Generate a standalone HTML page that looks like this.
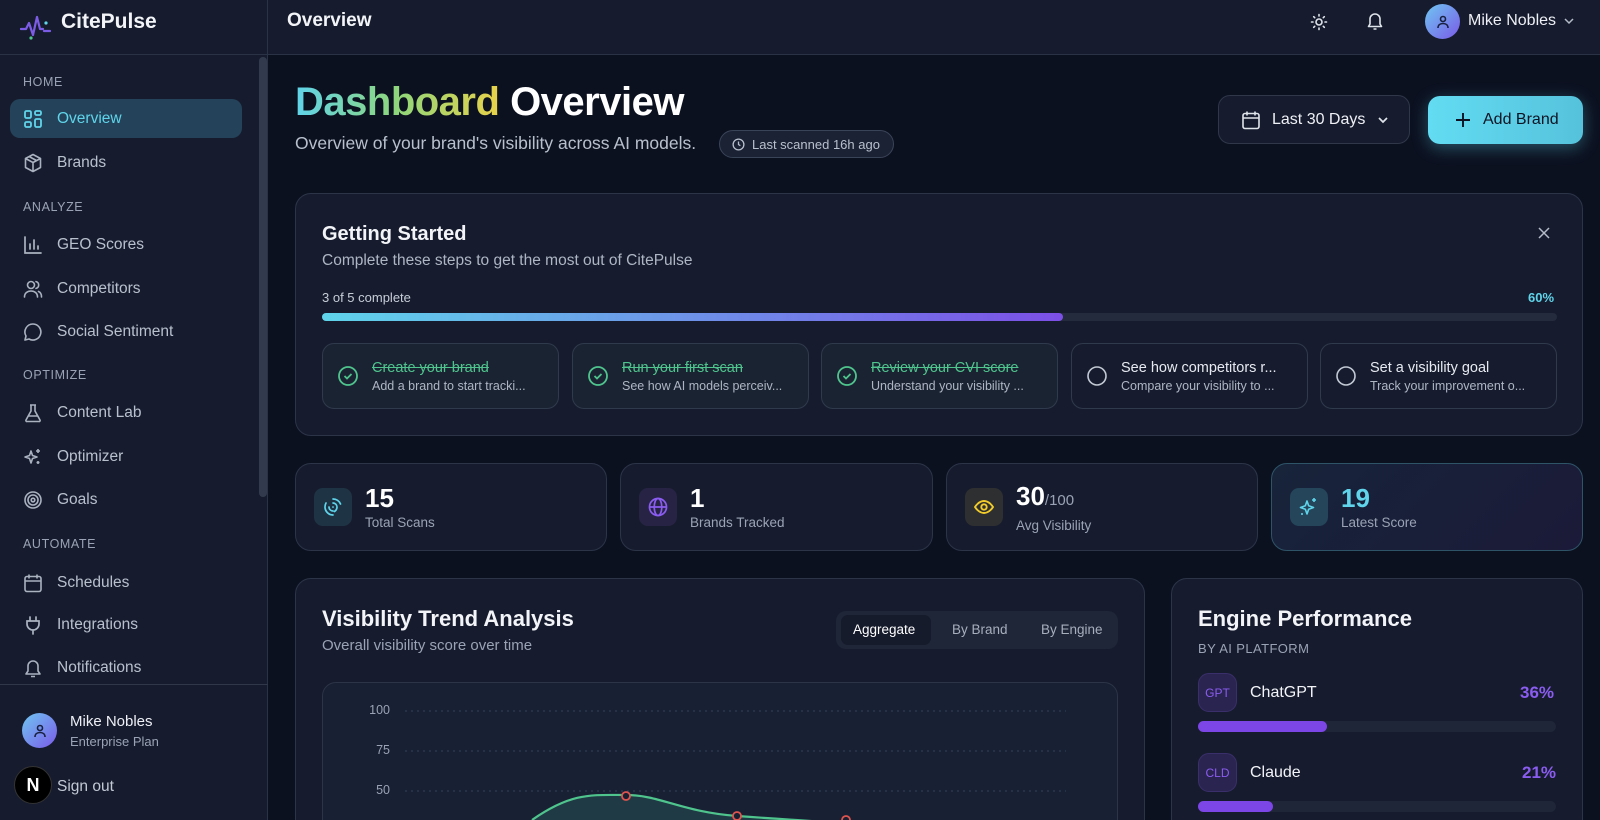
<!DOCTYPE html>
<html style="width:1600px;height:820px;overflow:hidden"><head><meta charset="utf-8"><style>
*{box-sizing:border-box;margin:0;padding:0}
body{width:1600px;height:820px;overflow:hidden;background:#0c1120;font-family:"Liberation Sans",sans-serif;color:#e6e9f0;position:relative}
.a{position:absolute}
svg{display:block}
.side{left:0;top:0;width:268px;height:820px;background:#161c2e;border-right:1px solid #2a3246}
.top{left:268px;top:0;width:1332px;height:55px;background:#161c2e;border-bottom:1px solid #2a3246}
.logo{left:0;top:0;width:268px;height:55px;border-bottom:1px solid #2a3246}
.sec{left:23px;font-size:12.5px;letter-spacing:.6px;color:#9aa3b5}
.it{left:10px;width:232px;height:39px;border-radius:10px;display:flex;align-items:center;padding-left:13px;font-size:15.5px;color:#b9c0cd}
.it svg{margin-right:14px}
.it.on{background:#24435a;color:#5fd4ea}
.card{background:#161c2e;border:1px solid #2c3448;border-radius:16px}
.step{top:343px;width:237px;height:66px;border:1px solid #2f3a4c;border-radius:12px;background:#1a2332;display:flex;align-items:center;padding-left:14px}
.step .t{font-size:14.5px;color:#e6e9f0;white-space:nowrap}
.step .s{font-size:12.5px;color:#aeb6c4;white-space:nowrap;margin-top:3px}
.step.d .t{color:#4fc48d;text-decoration:line-through}
.stat{top:463px;height:88px;display:flex;align-items:center;padding-left:18px}
.ic{width:38px;height:38px;border-radius:9px;display:flex;align-items:center;justify-content:center;margin-right:13px}
.num{font-size:26px;font-weight:bold;color:#fff;line-height:28px}
.lab{font-size:13.5px;color:#9aa3b5;margin-top:3px}
.clip{left:0;top:0;width:1600px;height:820px;overflow:hidden}
</style></head><body><div class="a clip">
<div class="a side"></div>
<div class="a logo">
 <svg class="a" style="left:20px;top:13px" width="32" height="28" viewBox="0 0 32 28"><path d="M1 16h5l3-6 4 12 4-18 3 12h3" fill="none" stroke="#7c5ce6" stroke-width="2.2" stroke-linecap="round" stroke-linejoin="round"/><circle cx="26" cy="10" r="1.6" fill="#5fd4ea"/><circle cx="11" cy="25" r="1.6" fill="#4fc48d"/><path d="M24 18h6" stroke="#7c5ce6" stroke-width="2.2" stroke-linecap="round"/></svg>
 <div class="a" style="left:61px;top:10px;font-size:21px;font-weight:bold;color:#f2f4f8">CitePulse</div>
</div>
<div class="a" style="left:259px;top:57px;width:8px;height:440px;border-radius:4px;background:#323b4e"></div>
<div class="a sec" style="top:75px">HOME</div>
<div class="a it on" style="top:99px"><svg width="20" height="20" viewBox="0 0 20 20" fill="none" stroke="#5fd4ea" stroke-width="1.8"><rect x="2" y="2" width="6" height="7" rx="1.5"/><rect x="12" y="2" width="6" height="4" rx="1.5"/><rect x="12" y="10" width="6" height="8" rx="1.5"/><rect x="2" y="13" width="6" height="5" rx="1.5"/></svg>Overview</div>
<div class="a it" style="top:143px"><svg width="20" height="20" viewBox="0 0 20 20" fill="none" stroke="#aab2c0" stroke-width="1.6" stroke-linejoin="round"><path d="M10 1.5l7.5 4v9L10 18.5l-7.5-4v-9z M2.5 5.5L10 9.5l7.5-4 M10 9.5v9 M6 3.5l7.5 4"/></svg>Brands</div>
<div class="a sec" style="top:200px">ANALYZE</div>
<div class="a it" style="top:225px"><svg width="20" height="20" viewBox="0 0 20 20" fill="none" stroke="#aab2c0" stroke-width="1.7" stroke-linecap="round"><path d="M2 2v16h16 M7 14V9 M11 14V5 M15 14v-3"/></svg>GEO Scores</div>
<div class="a it" style="top:269px"><svg width="20" height="20" viewBox="0 0 20 20" fill="none" stroke="#aab2c0" stroke-width="1.6" stroke-linecap="round"><circle cx="8" cy="6" r="3.5"/><path d="M1.5 18c0-4 3-6 6.5-6s6.5 2 6.5 6 M13 2.6a3.5 3.5 0 010 6.8 M15.5 12.5c2 .8 3 2.8 3 5.5"/></svg>Competitors</div>
<div class="a it" style="top:312px"><svg width="20" height="20" viewBox="0 0 20 20" fill="none" stroke="#aab2c0" stroke-width="1.6" stroke-linejoin="round"><path d="M10 2a8 8 0 11-4 15L2 18l1-4A8 8 0 0110 2z"/></svg>Social Sentiment</div>
<div class="a sec" style="top:368px">OPTIMIZE</div>
<div class="a it" style="top:393px"><svg width="20" height="20" viewBox="0 0 20 20" fill="none" stroke="#aab2c0" stroke-width="1.6" stroke-linejoin="round"><path d="M7 2h6 M8 2v6l-5 9a1 1 0 001 1.5h12a1 1 0 001-1.5l-5-9V2 M5 13h10"/></svg>Content Lab</div>
<div class="a it" style="top:437px"><svg width="20" height="20" viewBox="0 0 20 20" fill="none" stroke="#aab2c0" stroke-width="1.6" stroke-linejoin="round"><path d="M8 4l1.5 4.5L14 10l-4.5 1.5L8 16l-1.5-4.5L2 10l4.5-1.5z M15 2v4 M13 4h4 M15 14v3 M13.5 15.5h3"/></svg>Optimizer</div>
<div class="a it" style="top:480px"><svg width="20" height="20" viewBox="0 0 20 20" fill="none" stroke="#aab2c0" stroke-width="1.6"><circle cx="10" cy="10" r="8"/><circle cx="10" cy="10" r="5"/><circle cx="10" cy="10" r="1.8"/></svg>Goals</div>
<div class="a sec" style="top:537px">AUTOMATE</div>
<div class="a it" style="top:563px"><svg width="20" height="20" viewBox="0 0 20 20" fill="none" stroke="#aab2c0" stroke-width="1.6"><rect x="2" y="3.5" width="16" height="15" rx="2"/><path d="M2 8h16 M6 1.5v4 M14 1.5v4"/></svg>Schedules</div>
<div class="a it" style="top:605px"><svg width="20" height="20" viewBox="0 0 20 20" fill="none" stroke="#aab2c0" stroke-width="1.7" stroke-linecap="round"><path d="M7 2v4 M13 2v4 M4 6h12v3a6 6 0 01-12 0z M10 15v4"/></svg>Integrations</div>
<div class="a it" style="top:648px"><svg width="20" height="20" viewBox="0 0 20 20" fill="none" stroke="#aab2c0" stroke-width="1.6" stroke-linejoin="round"><path d="M5 8a5 5 0 0110 0v5l2 3H3l2-3z M8 18.5h4"/></svg>Notifications</div>
<div class="a" style="left:0;top:684px;width:268px;border-top:1px solid #2f3749"></div>
<div class="a" style="left:22px;top:713px;width:35px;height:35px;border-radius:50%;background:linear-gradient(135deg,#6fc6f2,#7a5ae8);display:flex;align-items:center;justify-content:center"><svg width="16" height="16" viewBox="0 0 16 16" fill="none" stroke="#1a2040" stroke-width="1.6"><circle cx="8" cy="5" r="2.5"/><path d="M3 14c0-3 2.2-4.5 5-4.5s5 1.5 5 4.5"/></svg></div>
<div class="a" style="left:70px;top:713px;font-size:15px;color:#eef0f5">Mike Nobles</div>
<div class="a" style="left:70px;top:734px;font-size:13px;color:#9aa3b5">Enterprise Plan</div>
<div class="a" style="left:14px;top:766px;width:38px;height:38px;border-radius:50%;background:#000;border:1px solid #333;color:#fff;font-size:18px;font-weight:bold;display:flex;align-items:center;justify-content:center">N</div>
<div class="a" style="left:57px;top:778px;font-size:15.5px;color:#c3c9d4">Sign out</div>

<div class="a top"></div>
<div class="a" style="left:287px;top:10px;font-size:19px;font-weight:bold;color:#f2f4f8">Overview</div>
<svg class="a" style="left:1309px;top:12px" width="20" height="20" viewBox="0 0 20 20" fill="none" stroke="#dfe3ea" stroke-width="1.6" stroke-linecap="round"><circle cx="10" cy="10" r="3"/><path d="M10 2.5v1.5M10 16v1.5M2.5 10H4M16 10h1.5M4.7 4.7l1 1M14.3 14.3l1 1M4.7 15.3l1-1M14.3 5.7l1-1"/></svg>
<svg class="a" style="left:1365px;top:11px" width="20" height="20" viewBox="0 0 20 20" fill="none" stroke="#dfe3ea" stroke-width="1.6" stroke-linejoin="round"><path d="M5 8a5 5 0 0110 0v5l1.5 2.5h-13L5 13z M8.5 18h3"/></svg>
<div class="a" style="left:1425px;top:4px;width:35px;height:35px;border-radius:50%;background:linear-gradient(135deg,#6fc6f2,#7a5ae8);display:flex;align-items:center;justify-content:center"><svg width="16" height="16" viewBox="0 0 16 16" fill="none" stroke="#1a2040" stroke-width="1.6"><circle cx="8" cy="5" r="2.5"/><path d="M3 14c0-3 2.2-4.5 5-4.5s5 1.5 5 4.5"/></svg></div>
<div class="a" style="left:1468px;top:12px;font-size:16px;color:#eef0f5">Mike Nobles</div>
<svg class="a" style="left:1563px;top:16px" width="12" height="10" viewBox="0 0 12 10" fill="none" stroke="#b5bcc8" stroke-width="1.5"><path d="M2 3l4 4 4-4"/></svg>

<div class="a" style="left:295px;top:80px;font-size:40px;font-weight:bold;letter-spacing:-.5px"><span style="background:linear-gradient(90deg,#5fd4ea,#8fd67a,#e8d24a);-webkit-background-clip:text;color:transparent">Dashboard</span> <span style="color:#fff">Overview</span></div>
<div class="a" style="left:295px;top:133px;font-size:17.5px;color:#b9c0cd">Overview of your brand's visibility across AI models.</div>
<div class="a" style="left:719px;top:130px;width:175px;height:28px;border:1px solid #3a4458;border-radius:14px;background:#1b2234;font-size:13px;color:#b9c0cd;display:flex;align-items:center;padding-left:12px"><svg width="13" height="13" viewBox="0 0 14 14" fill="none" stroke="#b9c0cd" stroke-width="1.4" style="margin-right:7px"><circle cx="7" cy="7" r="5.8"/><path d="M7 3.8V7l2 1.3"/></svg>Last scanned 16h ago</div>
<div class="a" style="left:1218px;top:95px;width:192px;height:49px;border:1px solid #2f3749;border-radius:12px;background:#161c2e;display:flex;align-items:center;padding-left:22px;font-size:16px;color:#eef0f5"><svg width="20" height="20" viewBox="0 0 20 20" fill="none" stroke="#dfe3ea" stroke-width="1.6" style="margin-right:11px"><rect x="2" y="3.5" width="16" height="15" rx="2"/><path d="M2 8h16 M6 1.5v4 M14 1.5v4"/></svg>Last 30 Days<svg width="12" height="10" viewBox="0 0 12 10" fill="none" stroke="#dfe3ea" stroke-width="1.7" style="margin-left:12px"><path d="M2 3l4 4 4-4"/></svg></div>
<div class="a" style="left:1428px;top:96px;width:155px;height:48px;border-radius:12px;background:linear-gradient(90deg,#62dcf2,#56c2dc);box-shadow:0 4px 16px rgba(90,210,235,.35);display:flex;align-items:center;padding-left:26px;font-size:16px;color:#0d1424"><svg width="18" height="18" viewBox="0 0 18 18" stroke="#0d1424" stroke-width="1.9"><path d="M9 2v14M2 9h14"/></svg><span style="margin-left:11px">Add Brand</span></div>

<div class="a card" style="left:295px;top:193px;width:1288px;height:243px"></div>
<div class="a" style="left:322px;top:223px;font-size:20px;font-weight:bold;color:#f2f4f8">Getting Started</div>
<div class="a" style="left:322px;top:252px;font-size:15.5px;color:#aeb6c4">Complete these steps to get the most out of CitePulse</div>
<svg class="a" style="left:1537px;top:226px" width="14" height="14" viewBox="0 0 14 14" stroke="#b5bcc8" stroke-width="1.5"><path d="M2 2l10 10M12 2L2 12"/></svg>
<div class="a" style="left:322px;top:290px;font-size:13px;color:#c7cdd7">3 of 5 complete</div>
<div class="a" style="left:1528px;top:290px;font-size:13px;font-weight:bold;color:#5fd4ea">60%</div>
<div class="a" style="left:322px;top:313px;width:1235px;height:8px;border-radius:4px;background:#232b3c"></div>
<div class="a" style="left:322px;top:313px;width:741px;height:8px;border-radius:4px;background:linear-gradient(90deg,#5fd4ea,#7c4fe6)"></div>
<div class="a step d" style="left:322px"><svg width="22" height="22" viewBox="0 0 22 22" fill="none" stroke="#4fc48d" stroke-width="1.8" style="margin-right:13px;flex:none"><circle cx="11" cy="11" r="9"/><path d="M7.5 11l2.5 2.5 4.5-4.5"/></svg><div><div class="t">Create your brand</div><div class="s">Add a brand to start tracki...</div></div></div>
<div class="a step d" style="left:572px"><svg width="22" height="22" viewBox="0 0 22 22" fill="none" stroke="#4fc48d" stroke-width="1.8" style="margin-right:13px;flex:none"><circle cx="11" cy="11" r="9"/><path d="M7.5 11l2.5 2.5 4.5-4.5"/></svg><div><div class="t">Run your first scan</div><div class="s">See how AI models perceiv...</div></div></div>
<div class="a step d" style="left:821px"><svg width="22" height="22" viewBox="0 0 22 22" fill="none" stroke="#4fc48d" stroke-width="1.8" style="margin-right:13px;flex:none"><circle cx="11" cy="11" r="9"/><path d="M7.5 11l2.5 2.5 4.5-4.5"/></svg><div><div class="t">Review your CVI score</div><div class="s">Understand your visibility ...</div></div></div>
<div class="a step" style="left:1071px;background:#161c2e"><svg width="22" height="22" viewBox="0 0 22 22" fill="none" stroke="#c3c9d4" stroke-width="1.6" style="margin-right:13px;flex:none"><circle cx="11" cy="11" r="9"/></svg><div><div class="t">See how competitors r...</div><div class="s">Compare your visibility to ...</div></div></div>
<div class="a step" style="left:1320px;background:#161c2e"><svg width="22" height="22" viewBox="0 0 22 22" fill="none" stroke="#c3c9d4" stroke-width="1.6" style="margin-right:13px;flex:none"><circle cx="11" cy="11" r="9"/></svg><div><div class="t">Set a visibility goal</div><div class="s">Track your improvement o...</div></div></div>

<div class="a card stat" style="left:295px;width:312px"><div class="ic" style="background:#1e3344"><svg width="22" height="22" viewBox="0 0 22 22" fill="none" stroke="#5fd4ea" stroke-width="1.7" stroke-linecap="round"><path d="M11 3a8 8 0 017.5 5 M4 7a8 8 0 00-1 4c0 4.4 3.6 8 8 8 M11 7a4 4 0 014 4c0 2-1 3.5-2.5 4.5 M7 11a4 4 0 004 4 M11 11v.1"/></svg></div><div><div class="num">15</div><div class="lab">Total Scans</div></div></div>
<div class="a card stat" style="left:620px;width:313px"><div class="ic" style="background:#272345"><svg width="22" height="22" viewBox="0 0 22 22" fill="none" stroke="#8b5cf0" stroke-width="1.7"><circle cx="11" cy="11" r="8.5"/><ellipse cx="11" cy="11" rx="3.8" ry="8.5"/><path d="M2.5 11h17"/></svg></div><div><div class="num">1</div><div class="lab">Brands Tracked</div></div></div>
<div class="a card stat" style="left:946px;width:312px"><div class="ic" style="background:#2e2f30"><svg width="22" height="22" viewBox="0 0 22 22" fill="none" stroke="#f2cc2a" stroke-width="1.9"><path d="M2 11s3.5-6 9-6 9 6 9 6-3.5 6-9 6-9-6-9-6z"/><circle cx="11" cy="11" r="2.7"/></svg></div><div><div class="num">30<span style="font-size:15px;font-weight:normal;color:#9aa3b5">/100</span></div><div class="lab">Avg Visibility</div></div></div>
<div class="a card stat" style="left:1271px;width:312px;border-color:#2e5468;background:linear-gradient(135deg,#17243a,#1b1a38)"><div class="ic" style="background:#24455a"><svg width="22" height="22" viewBox="0 0 22 22" fill="none" stroke="#5fd4ea" stroke-width="1.6" stroke-linejoin="round"><path d="M9 5l1.7 4.8L15.5 11.5l-4.8 1.7L9 18l-1.7-4.8L2.5 11.5l4.8-1.7z M16 2v4 M14 4h4 M4 17v2"/></svg></div><div><div class="num" style="color:#5fd4ea">19</div><div class="lab">Latest Score</div></div></div>

<div class="a card" style="left:295px;top:578px;width:850px;height:260px"></div>
<div class="a" style="left:322px;top:606px;font-size:22px;font-weight:bold;color:#f2f4f8">Visibility Trend Analysis</div>
<div class="a" style="left:322px;top:637px;font-size:15px;color:#9aa3b5">Overall visibility score over time</div>
<div class="a" style="left:836px;top:611px;width:282px;height:38px;border-radius:10px;background:#1f2638"></div>
<div class="a" style="left:841px;top:615px;width:90px;height:30px;border-radius:7px;background:#151b2b"></div>
<div class="a" style="left:853px;top:622px;font-size:13.5px;color:#fff">Aggregate</div>
<div class="a" style="left:952px;top:622px;font-size:13.5px;color:#a7afbd">By Brand</div>
<div class="a" style="left:1041px;top:622px;font-size:13.5px;color:#a7afbd">By Engine</div>
<div class="a" style="left:322px;top:682px;width:796px;height:160px;border:1px solid #2c3448;border-radius:14px;background:#182033"></div>
<div class="a" style="left:360px;top:703px;width:30px;text-align:right;font-size:12.5px;color:#9aa3b5">100</div>
<div class="a" style="left:360px;top:743px;width:30px;text-align:right;font-size:12.5px;color:#9aa3b5">75</div>
<div class="a" style="left:360px;top:783px;width:30px;text-align:right;font-size:12.5px;color:#9aa3b5">50</div>
<svg class="a" style="left:322px;top:682px" width="796" height="138" viewBox="0 0 796 138"><g stroke="#33405a" stroke-dasharray="2 4"><path d="M83 29H744M83 69H744M83 109H744"/></g><path d="M210 138C250 110 270 113 304 113S360 130 415 134S480 138 500 138Z" fill="#1f3a44"/><path d="M210 138C250 110 270 113 304 113S360 130 415 134S480 138 500 140" fill="none" stroke="#4fc48d" stroke-width="2.2"/><circle cx="304" cy="114" r="4" fill="#182033" stroke="#e0544f" stroke-width="1.8"/><circle cx="415" cy="134" r="4" fill="#182033" stroke="#e0544f" stroke-width="1.8"/><circle cx="524" cy="138" r="4" fill="#182033" stroke="#e0544f" stroke-width="1.8"/></svg>

<div class="a card" style="left:1171px;top:578px;width:412px;height:260px"></div>
<div class="a" style="left:1198px;top:606px;font-size:22px;font-weight:bold;color:#f2f4f8">Engine Performance</div>
<div class="a" style="left:1198px;top:641px;font-size:13px;letter-spacing:.4px;color:#9aa3b5">BY AI PLATFORM</div>
<div class="a" style="left:1198px;top:673px;width:39px;height:39px;border-radius:11px;background:#2a2450;border:1px solid #3a2f6a;display:flex;align-items:center;justify-content:center;font-size:12px;color:#8b5cf0">GPT</div>
<div class="a" style="left:1250px;top:684px;font-size:16px;color:#f2f4f8">ChatGPT</div>
<div class="a" style="left:1520px;top:683px;font-size:17px;font-weight:bold;color:#8b5cf0">36%</div>
<div class="a" style="left:1198px;top:721px;width:358px;height:11px;border-radius:6px;background:#1f2638"></div>
<div class="a" style="left:1198px;top:721px;width:129px;height:11px;border-radius:6px;background:#7c45e6"></div>
<div class="a" style="left:1198px;top:753px;width:39px;height:39px;border-radius:11px;background:#2a2450;border:1px solid #3a2f6a;display:flex;align-items:center;justify-content:center;font-size:12px;color:#8b5cf0">CLD</div>
<div class="a" style="left:1250px;top:764px;font-size:16px;color:#f2f4f8">Claude</div>
<div class="a" style="left:1522px;top:763px;font-size:17px;font-weight:bold;color:#8b5cf0">21%</div>
<div class="a" style="left:1198px;top:801px;width:358px;height:11px;border-radius:6px;background:#1f2638"></div>
<div class="a" style="left:1198px;top:801px;width:75px;height:11px;border-radius:6px;background:#7c45e6"></div>
</div></body></html>
